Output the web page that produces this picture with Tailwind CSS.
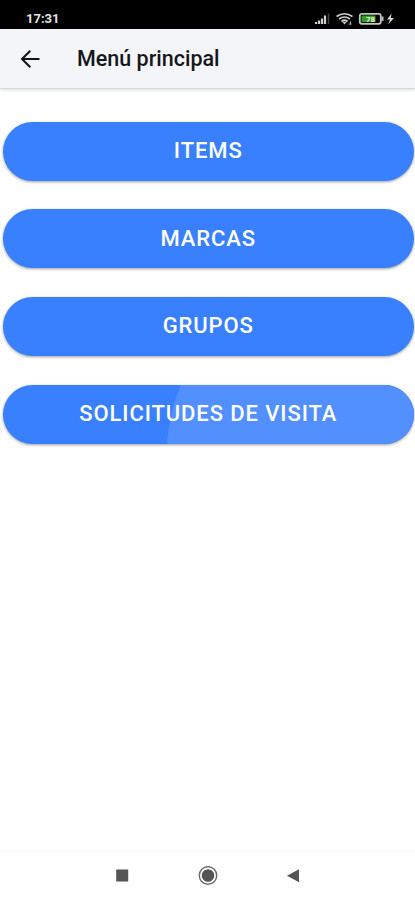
<!DOCTYPE html>
<html lang="es">

<head>
  <meta charset="UTF-8">
  <meta name="viewport" content="width=device-width, initial-scale=1.0">
  <title>Menú principal</title>
  <script src="https://cdn.jsdelivr.net/npm/@tailwindcss/browser@4"></script>
</head>

<body class="bg-white font-[Roboto,sans-serif]">
<div class="h-screen flex flex-col overflow-hidden">
  <!-- Barra de estado -->
  <div class="h-[29px] shrink-0 bg-black flex items-center justify-between pl-[26px] pr-[18px] pt-[9px]">
    <span class="text-[#e4e4e4] text-[13px] leading-5 font-bold">17:31</span>
    <svg class="w-[82px] h-[14px]" viewBox="0 0 82 14" fill="none">
      <!-- señal -->
      <path d="M1 12V10M4 12V8.500M7 12V6.500M10 12V3.500" stroke="#d0d0d0" stroke-width="2.200"/>
      <path d="M13.500 12V1.500" stroke="#444" stroke-width="1.500"/>
      <!-- wifi -->
      <path d="M21.500 4.500Q29.500 -1 37.500 4.500M24 7Q29.500 3 35 7M26.500 9.500Q29.500 7 32.500 9.500" stroke="#d0d0d0" stroke-width="1.700"/>
      <path d="M29.500 12.500l-2-2.500h4z" fill="#d0d0d0"/>
      <path d="M33.500 12h3M35.500 9.500v3" stroke="#aaa" stroke-width="1"/>
      <!-- batería -->
      <rect x="44.800" y="1.800" width="21" height="10" rx="2" stroke="#c4c4c4" stroke-width="1.800"/>
      <path d="M67.500 4.500v4.500" stroke="#c4c4c4" stroke-width="2"/>
      <rect x="46.500" y="3.500" width="14" height="6.600" fill="#359a20"/>
      <text x="55.500" y="9.800" text-anchor="middle" fill="#e8f5dd" font-size="8" font-weight="700" font-family="Roboto">78</text>
      <path d="M76.500 1.500L72 7.500h3L73 12.500l6-6.500h-3.200z" fill="#d8d8d8"/>
    </svg>
  </div>

  <!-- Cabecera -->
  <header class="h-[60px] shrink-0 bg-[#f4f5f9] flex items-center border-b border-[#d8dadb] shadow-[0_1px_3px_rgba(0,0,0,0.14)]">
    <button class="ml-[20px] mr-[37px]" aria-label="Volver">
      <svg class="w-5 h-5" viewBox="0 0 20 20" fill="none" stroke="#111" stroke-width="2">
        <path d="M19.500 10H2.500M10.300 1.800L2 10l8.300 8.200"/>
      </svg>
    </button>
    <h1 class="text-[21.500px] leading-7 font-medium text-[#16171a] tracking-[0px]">Menú principal</h1>
  </header>

  <!-- Opciones -->
  <main class="flex-1 flex flex-col gap-[28.700px] pt-[32.500px] pl-[3px] pr-[1.500px]">
    <button class="h-[59px] rounded-full bg-[#3880ff] text-white text-[22px] font-medium tracking-[0.900px] pb-px shadow-[0_1px_3px_rgba(0,0,0,0.4)]">ITEMS</button>
    <button class="h-[59px] rounded-full bg-[#3880ff] text-white text-[22px] font-medium tracking-[0.900px] pb-px shadow-[0_1px_3px_rgba(0,0,0,0.4)]">MARCAS</button>
    <button class="h-[59px] rounded-full bg-[#3880ff] text-white text-[22px] font-medium tracking-[0.900px] pb-px shadow-[0_1px_3px_rgba(0,0,0,0.4)]">GRUPOS</button>
    <button class="relative overflow-hidden h-[59px] rounded-full bg-[#3880ff] text-white text-[22px] font-medium tracking-[0.900px] pb-px shadow-[0_1px_3px_rgba(0,0,0,0.4)]">
      <!-- onda al pulsar -->
      <svg class="absolute inset-0 w-full h-full" viewBox="0 0 410.500 59" preserveAspectRatio="none">
        <path d="M178 0Q166.500 25 164 59H411V0z" fill="#528fff"/>
      </svg>
      <span class="relative">SOLICITUDES DE VISITA</span>
    </button>
  </main>

  <!-- Navegación del sistema -->
  <nav class="h-[49px] shrink-0 border-t border-[#f7f7f7] flex items-center justify-center">
    <svg class="w-[200px] h-6" viewBox="0 0 200 24">
      <rect x="8.200" y="5.500" width="12" height="12" fill="#555"/>
      <circle cx="100" cy="11.500" r="8.700" fill="none" stroke="#666" stroke-width="1.400"/>
      <circle cx="100" cy="11.500" r="6.300" fill="#555"/>
      <path d="M191 5.200v13L179 11.700z" fill="#555"/>
    </svg>
  </nav>
</div>
</body>

</html>
